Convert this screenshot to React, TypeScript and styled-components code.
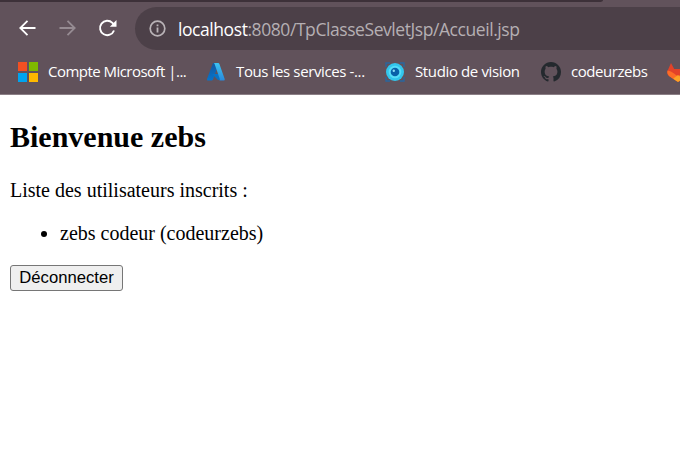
import React from "react";
import styled, { createGlobalStyle } from "styled-components";

const GlobalStyle = createGlobalStyle`
  * { box-sizing: border-box; }
  body { margin: 0; background: #fff; overflow: hidden; }
`;

const Window = styled.div`
  width: 680px;
  height: 454px;
  overflow: hidden;
  background: #fff;
`;

const Chrome = styled.header`
  height: 95px;
  background: #61525b;
  border-bottom: 1px solid #8b7f86;
  font-family: "Open Sans", "Noto Sans", sans-serif;
`;

const TabStrip = styled.div`
  width: 603px;
  height: 2px;
  background: #3d3139;
  border-bottom-right-radius: 4px 2px;
`;

const Toolbar = styled.div`
  display: flex;
  align-items: center;
  height: 43px;
  margin-top: 5px;
`;

const Navigation = styled.nav`
  display: flex;
  width: 135px;
  padding: 0 0 2px 15px;
  gap: 16px;
  svg { display: block; flex: none; }
`;

const AddressBar = styled.div`
  display: flex;
  align-items: center;
  flex: 1;
  height: 43px;
  padding-left: 14px;
  gap: 12px;
  background: #4c4048;
  border-radius: 22px 0 0 22px;
`;

const Url = styled.span`
  font-size: 17.5px;
  line-height: 24px;
  letter-spacing: -0.43px;
  color: #b5afb3;
  white-space: nowrap;
`;

const Host = styled.span`
  color: #fff;
`;

const Bookmarks = styled.nav`
  display: flex;
  align-items: center;
  height: 44px;
  padding-left: 18px;
`;

const Bookmark = styled.div<{ $width: number }>`
  display: flex;
  align-items: center;
  flex: none;
  width: ${(p) => p.$width}px;
  gap: 10px;
  svg { display: block; flex: none; }
`;

const Label = styled.span<{ $spacing: number }>`
  padding-bottom: 2px;
  font-size: 15px;
  line-height: 20px;
  letter-spacing: ${(p) => p.$spacing}px;
  color: #fff;
  white-space: nowrap;
`;

const Page = styled.main`
  padding: 0 10px;
  font-family: "Liberation Serif", "Times New Roman", serif;
  font-size: 20px;
  line-height: 23px;
  color: #000;
`;

const Title = styled.h2`
  margin: 0;
  padding-top: 25px;
  font-size: 30px;
  line-height: 34px;
`;

const Intro = styled.p`
  margin: 25px 0 20px;
`;

const Users = styled.ul`
  margin: 0 0 20px;
  padding-left: 50px;
`;

const Logout = styled.button`
  display: block;
  width: 113px;
  height: 26px;
  padding: 0;
  border: 1px solid #767676;
  border-radius: 3px;
  background: #efefef;
  color: #000;
  font: 16.67px/22px "Liberation Sans", Arial, sans-serif;
`;

const BackIcon = () => (
  <svg width="24" height="24" viewBox="0 0 24 24" fill="none" stroke="#fff" strokeWidth="1.8">
    <path d="M20.500 12H5.500M12.500 4.800L5.300 12l7.200 7.200" />
  </svg>
);

const ForwardIcon = () => (
  <svg width="24" height="24" viewBox="0 0 24 24" fill="none" stroke="#968b92" strokeWidth="1.8">
    <path d="M4.500 12h15M12.500 4.800l7.200 7.200-7.200 7.200" />
  </svg>
);

const ReloadIcon = () => (
  <svg width="26" height="24" viewBox="0 0 26 24" fill="none">
    <path d="M19 14.500A7.200 7.200 0 1 1 17.400 6.900L19.500 9" stroke="#fff" strokeWidth="1.900" />
    <path d="M21.500 4v6.700h-6.700z" fill="#fff" />
  </svg>
);

const InfoIcon = () => (
  <svg width="17" height="17" viewBox="0 0 17 17">
    <circle cx="8.500" cy="8.500" r="7.300" fill="none" stroke="#b9b3b7" strokeWidth="1.700" />
    <path d="M7.600 7.500h1.800v5H7.600zM7.600 4.500h1.800v1.800H7.600z" fill="#b9b3b7" />
  </svg>
);

const MicrosoftIcon = () => (
  <svg width="20" height="20" viewBox="0 0 20 20" shapeRendering="crispEdges">
    <path d="M0 0h9v9H0z" fill="#f25022" />
    <path d="M11 0h9v9h-9z" fill="#7fba00" />
    <path d="M0 11h9v9H0z" fill="#00a4ef" />
    <path d="M11 11h9v9h-9z" fill="#ffb900" />
  </svg>
);

const AzureIcon = () => (
  <svg width="20" height="20" viewBox="0 0 20 20">
    <defs>
      <linearGradient id="azure-left" x1="0" y1="0" x2="0" y2="1">
        <stop offset="0" stopColor="#13589f" />
        <stop offset="1" stopColor="#0873c9" />
      </linearGradient>
      <linearGradient id="azure-right" x1="0" y1="0" x2="0" y2="1">
        <stop offset="0" stopColor="#3ec5f1" />
        <stop offset="1" stopColor="#2889dc" />
      </linearGradient>
    </defs>
    <path d="M7 1h6L7 17.500Q6.600 18.500 5.500 18.500H2Q.5 18.500 1 17z" fill="url(#azure-left)" />
    <path d="M6 12h9l-1 6H12z" fill="#0872c4" />
    <path d="M7.500 1h4.700Q13 1 13.400 2l5.300 15q.4 1.500-1 1.500h-4.500q1-.3.600-1.500L8.600 2Q8.300 1.200 7.500 1z" fill="url(#azure-right)" />
  </svg>
);

const VisionIcon = () => (
  <svg width="20" height="20" viewBox="0 0 20 20">
    <path d="M1 5V1h4M15 1h4v4M19 15v4h-4M5 19H1v-4" fill="none" stroke="#2867a0" strokeWidth="1.300" />
    <circle cx="10" cy="10" r="9" fill="#32c6ec" />
    <circle cx="10" cy="10" r="6.300" fill="#55dcf7" />
    <circle cx="10" cy="10" r="4.300" fill="#0960a8" />
    <circle cx="8.800" cy="8.800" r="1.200" fill="#8bdcf5" />
  </svg>
);

const GithubIcon = () => (
  <svg width="20" height="20" viewBox="0 0 16 16" fill="#24292e">
    <path d="M8 0C3.580 0 0 3.580 0 8c0 3.540 2.290 6.530 5.470 7.590.4.070.55-.17.55-.38 0-.19-.01-.82-.01-1.490-2.010.37-2.530-.49-2.690-.94-.09-.23-.48-.94-.82-1.130-.28-.15-.68-.52-.01-.53.630-.01 1.080.58 1.230.82.720 1.210 1.870.87 2.330.66.070-.52.280-.87.510-1.070-1.780-.2-3.640-.89-3.640-3.950 0-.87.310-1.590.82-2.150-.08-.2-.36-1.020.08-2.120 0 0 .67-.21 2.200.82.640-.18 1.320-.27 2-.27s1.360.09 2 .27c1.530-1.040 2.200-.82 2.200-.82.440 1.100.16 1.920.08 2.120.51.560.82 1.270.82 2.150 0 3.070-1.870 3.750-3.650 3.950.29.250.54.730.54 1.480 0 1.070-.01 1.930-.01 2.200 0 .21.150.46.550.38A8.010 8.010 0 0 0 16 8c0-4.420-3.580-8-8-8z" />
  </svg>
);

const GitlabIcon = () => (
  <svg width="22" height="20" viewBox="0 0 22 20">
    <path d="M4 1l3.200 6h7.600L18 1l3.500 8q.8 3-1.500 5l-9 6-9-6Q-.3 12 .5 9z" fill="#e24329" />
    <path d="M.5 8.500Q4 9 7 11.500l4 3-5 2.200L2 14Q-.3 12 .5 8.500zM21.500 8.500Q18 9 15 11.500l-4 3 5 2.200 4-2.700q2.300-2 1.500-5.500z" fill="#fc6d26" />
    <path d="M6 16.700l5-3.700 5 3.700-5 3.300z" fill="#fca326" />
  </svg>
);

export default function App() {
  return (
    <>
      <GlobalStyle />
      <Window>
        <Chrome>
          <TabStrip />
          <Toolbar>
            <Navigation>
              <BackIcon />
              <ForwardIcon />
              <ReloadIcon />
            </Navigation>
            <AddressBar>
              <InfoIcon />
              <Url><Host>localhost</Host>:8080/TpClasseSevletJsp/Accueil.jsp</Url>
            </AddressBar>
          </Toolbar>
          <Bookmarks>
            <Bookmark $width={188}><MicrosoftIcon /><Label $spacing={-0.53}>Compte Microsoft |...</Label></Bookmark>
            <Bookmark $width={179}><AzureIcon /><Label $spacing={-0.38}>Tous les services -...</Label></Bookmark>
            <Bookmark $width={156}><VisionIcon /><Label $spacing={-0.37}>Studio de vision</Label></Bookmark>
            <Bookmark $width={126}><GithubIcon /><Label $spacing={-0.45}>codeurzebs</Label></Bookmark>
            <Bookmark $width={30}><GitlabIcon /></Bookmark>
          </Bookmarks>
        </Chrome>
        <Page>
          <Title>Bienvenue zebs</Title>
          <Intro>Liste des utilisateurs inscrits :</Intro>
          <Users>
            <li>zebs codeur (codeurzebs)</li>
          </Users>
          <Logout type="button">Déconnecter</Logout>
        </Page>
      </Window>
    </>
  );
}
